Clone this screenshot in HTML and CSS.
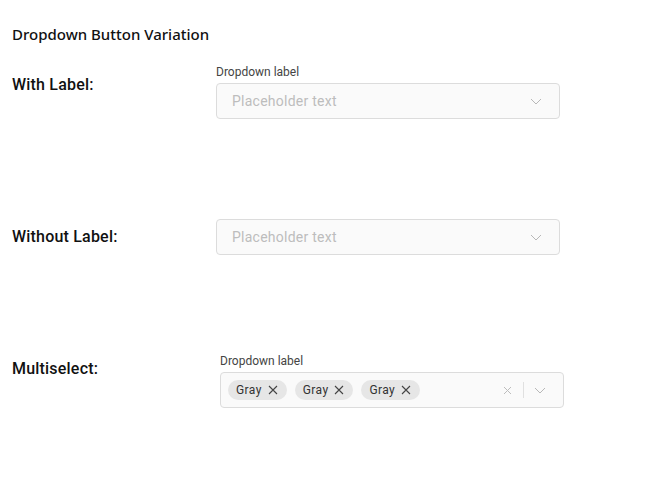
FILE: index.html
```html
<!DOCTYPE html>
<html>
<head>
<meta charset="utf-8">
<link rel="stylesheet" href="styles.css">
</head>
<body>
<div class="page">
  <h1 class="title">Dropdown Button Variation</h1>

  <div class="row row-labeled">
    <div class="row-label">With Label:</div>
    <div class="field">
      <div class="field-label">Dropdown label</div>
      <div class="select">
        <span class="placeholder">Placeholder text</span>
        <svg class="chev" width="12" height="7" viewBox="0 0 12 7"><path d="M1 1l5 5 5-5" fill="none" stroke="#b8b8b8" stroke-width="1"/></svg>
      </div>
    </div>
  </div>

  <div class="row row-plain">
    <div class="row-label">Without Label:</div>
    <div class="field">
      <div class="select">
        <span class="placeholder">Placeholder text</span>
        <svg class="chev" width="12" height="7" viewBox="0 0 12 7"><path d="M1 1l5 5 5-5" fill="none" stroke="#b8b8b8" stroke-width="1"/></svg>
      </div>
    </div>
  </div>

  <div class="row row-multi">
    <div class="row-label">Multiselect:</div>
    <div class="field field-multi">
      <div class="field-label">Dropdown label</div>
      <div class="select select-multi">
        <div class="chips">
          <span class="chip">Gray <svg width="10" height="10" viewBox="0 0 10 10"><path d="M1 1l8 8M9 1l-8 8" stroke="#444" stroke-width="1.1"/></svg></span>
          <span class="chip">Gray <svg width="10" height="10" viewBox="0 0 10 10"><path d="M1 1l8 8M9 1l-8 8" stroke="#444" stroke-width="1.1"/></svg></span>
          <span class="chip">Gray <svg width="10" height="10" viewBox="0 0 10 10"><path d="M1 1l8 8M9 1l-8 8" stroke="#444" stroke-width="1.1"/></svg></span>
        </div>
        <div class="actions">
          <svg width="9" height="9" viewBox="0 0 9 9"><path d="M1 1l7 7M8 1l-7 7" stroke="#bdbdbd" stroke-width="1"/></svg>
          <span class="divider"></span>
          <svg width="12" height="7" viewBox="0 0 12 7"><path d="M1 1l5 5 5-5" fill="none" stroke="#b8b8b8" stroke-width="1"/></svg>
        </div>
      </div>
    </div>
  </div>
</div>
</body>
</html>
```
FILE: styles.css
```css
* { box-sizing: border-box; }
html, body { margin: 0; padding: 0; background: #fff; }
body { font-family: Roboto, "Liberation Sans", sans-serif; color: #111; }
.page { padding: 24px 12px 0 12px; width: 660px; }
.title {
  margin: 0;
  font-family: "Noto Sans", "Open Sans", sans-serif;
  font-size: 15px;
  font-weight: 500;
  line-height: 20px;
  color: #111;
}
.row { display: flex; }
.row-label {
  width: 204px;
  flex: none;
  font-size: 16px;
  font-weight: 500;
  letter-spacing: 0.2px;
  line-height: 20px;
  color: #111;
}
.row-labeled { margin-top: 20px; }
.row-labeled .row-label { padding-top: 11px; }
.row-plain { margin-top: 100px; align-items: center; }
.row-multi { margin-top: 98px; }
.row-multi .row-label { padding-top: 6px; }
.field { width: 344px; }
.field-multi { margin-left: 4px; }
.field-label {
  font-size: 12px;
  line-height: 16px;
  color: #444;
  margin-bottom: 3px;
}
.select {
  height: 36px;
  border: 1px solid #dcdcdc;
  border-radius: 4px;
  background: #fafafa;
  display: flex;
  align-items: center;
  justify-content: space-between;
  padding: 0 17px 0 15px;
}
.placeholder { font-size: 14px; letter-spacing: 0.25px; color: #bdbdbd; }
.chev { display: block; }
.select-multi { padding: 0 17px 0 7px; }
.chips { display: flex; gap: 8px; }
.chip {
  display: inline-flex;
  align-items: center;
  gap: 6px;
  height: 20px;
  padding: 0 9px 0 8px;
  border-radius: 10px;
  background: #e6e6e6;
  font-size: 12px;
  letter-spacing: 0.4px;
  color: #333;
}
.chip svg { display: block; }
.actions { display: flex; align-items: center; }
.actions svg { display: block; }
.divider { width: 1px; height: 16px; background: #e0e0e0; margin: 0 10px 0 11px; }
```
